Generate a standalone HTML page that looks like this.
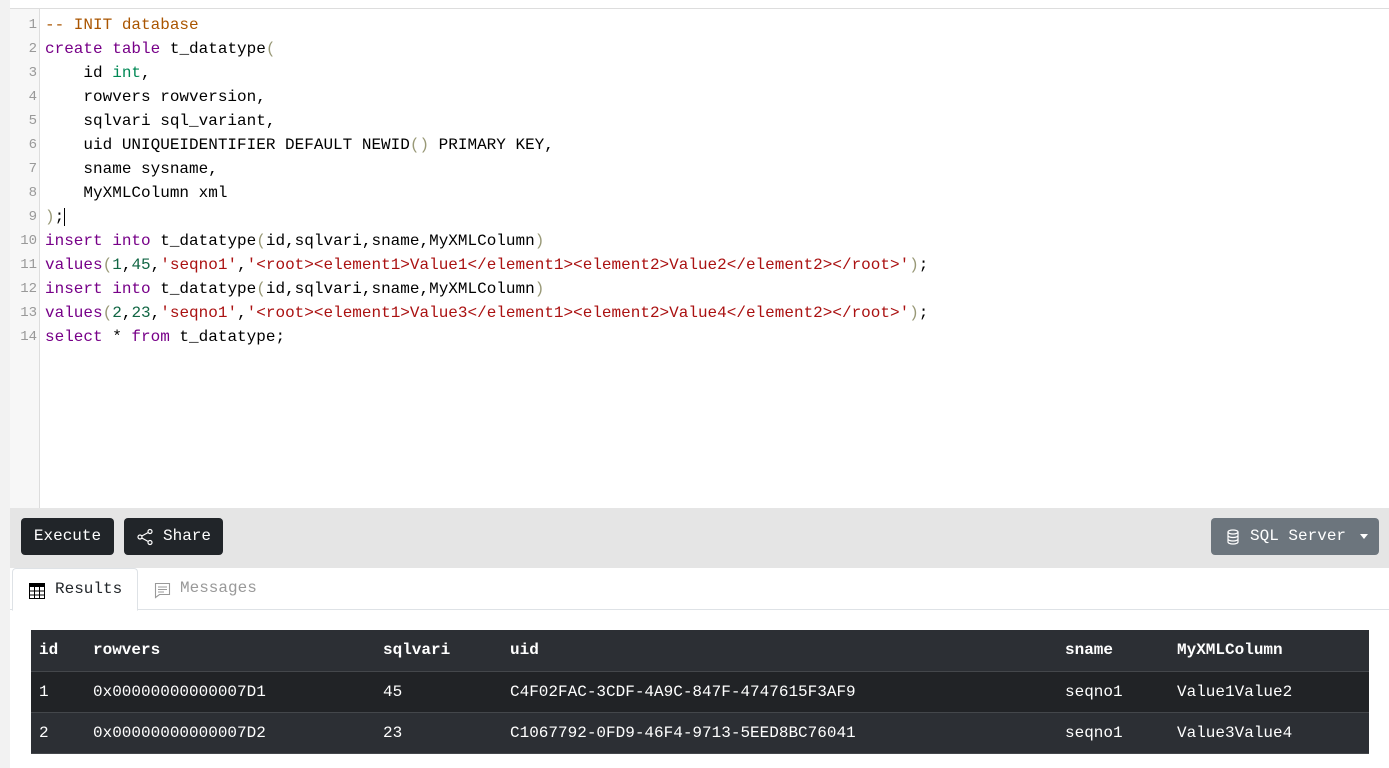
<!DOCTYPE html>
<html><head><meta charset="utf-8"><style>
*{box-sizing:border-box;margin:0;padding:0}
body{width:1389px;height:768px;overflow:hidden;background:#fff;font-family:"Liberation Mono",monospace;font-size:16px;position:relative}
.lstrip{position:absolute;left:0;top:0;width:10px;height:768px;background:#f2f2f2}
.editor{position:absolute;left:10px;top:8px;width:1379px;height:500px;border-top:1px solid #ddd;background:#fff}
.gutter{position:absolute;left:0;top:0;width:30px;height:100%;background:#f7f7f7;border-right:1px solid #ddd}
.ln{position:absolute;left:0;width:27px;text-align:right;color:#999;font-size:14px;height:24px;line-height:24px}
.code{position:absolute;left:35px;top:4px;white-space:pre;line-height:24px;color:#000}
.k{color:#708}.c{color:#a50}.s{color:#a11}.n{color:#164}.t{color:#085}.p{color:#997}
.bar{position:absolute;left:10px;top:508px;width:1379px;height:60px;background:#e5e5e5}
.btn{position:absolute;top:10px;height:37px;border-radius:4px;background:#212529;color:#fff;font-size:16px;line-height:37px}
.tabs{position:absolute;left:10px;top:568px;width:1379px;height:42px;border-bottom:1px solid #dee2e6}
.tab{position:absolute;top:0;height:42px;line-height:40px;font-size:16px}
table{position:absolute;left:31px;top:630px;width:1338px;border-collapse:collapse;color:#fff;font-size:16px}
td,th{text-align:left;height:41px;padding:0 0 0 8px;font-weight:normal;border-bottom:1px solid #44474b}
th{font-weight:bold;background:#2c2f34}
tr.r1 td{background:#212326}tr.r2 td{background:#2c2f34}
</style></head><body>
<div class="lstrip"></div>
<div class="editor">
<div class="gutter">
<div class="ln" style="top:4px">1</div><div class="ln" style="top:28px">2</div><div class="ln" style="top:52px">3</div><div class="ln" style="top:76px">4</div><div class="ln" style="top:100px">5</div><div class="ln" style="top:124px">6</div><div class="ln" style="top:148px">7</div><div class="ln" style="top:172px">8</div><div class="ln" style="top:196px">9</div><div class="ln" style="top:220px">10</div><div class="ln" style="top:244px">11</div><div class="ln" style="top:268px">12</div><div class="ln" style="top:292px">13</div><div class="ln" style="top:316px">14</div>
</div>
<div class="code"><span class="c">-- INIT database</span>
<span class="k">create</span> <span class="k">table</span> t_datatype<span class="p">(</span>
    id <span class="t">int</span>,
    rowvers rowversion,
    sqlvari sql_variant,
    uid UNIQUEIDENTIFIER DEFAULT NEWID<span class="p">()</span> PRIMARY KEY,
    sname sysname,
    MyXMLColumn xml
<span class="p">)</span>;<span style="border-left:1px solid #000"></span>
<span class="k">insert</span> <span class="k">into</span> t_datatype<span class="p">(</span>id,sqlvari,sname,MyXMLColumn<span class="p">)</span>
<span class="k">values</span><span class="p">(</span><span class="n">1</span>,<span class="n">45</span>,<span class="s">'seqno1'</span>,<span class="s">'&lt;root&gt;&lt;element1&gt;Value1&lt;/element1&gt;&lt;element2&gt;Value2&lt;/element2&gt;&lt;/root&gt;'</span><span class="p">)</span>;
<span class="k">insert</span> <span class="k">into</span> t_datatype<span class="p">(</span>id,sqlvari,sname,MyXMLColumn<span class="p">)</span>
<span class="k">values</span><span class="p">(</span><span class="n">2</span>,<span class="n">23</span>,<span class="s">'seqno1'</span>,<span class="s">'&lt;root&gt;&lt;element1&gt;Value3&lt;/element1&gt;&lt;element2&gt;Value4&lt;/element2&gt;&lt;/root&gt;'</span><span class="p">)</span>;
<span class="k">select</span> * <span class="k">from</span> t_datatype;</div>
</div>
<div class="bar">
<div class="btn" style="left:11px;width:93px;text-align:center">Execute</div>
<div class="btn" style="left:114px;width:99px;padding-left:39px">
<svg style="position:absolute;left:12px;top:10px" width="18" height="18" viewBox="0 0 18 18" fill="none" stroke="#fff" stroke-width="1.2"><circle cx="14" cy="3.5" r="2"/><circle cx="4" cy="9" r="2"/><circle cx="14" cy="14.5" r="2"/><path d="M5.8 8 12.2 4.5M5.8 10 12.2 13.5"/></svg>Share</div>
<div class="btn" style="left:1201px;width:168px;background:#6c757d;padding-left:39px">
<svg style="position:absolute;left:15px;top:11px" width="14" height="16" viewBox="0 0 14 16" fill="none" stroke="#fff" stroke-width="1.2"><ellipse cx="7" cy="3" rx="5" ry="2"/><path d="M2 3v10c0 1.1 2.2 2 5 2s5-.9 5-2V3M2 6.5c0 1.1 2.2 2 5 2s5-.9 5-2M2 10c0 1.1 2.2 2 5 2s5-.9 5-2"/></svg>SQL Server<span style="position:absolute;left:149px;top:16px;border-left:4px solid transparent;border-right:4px solid transparent;border-top:5px solid #fff"></span></div>
</div>
<div class="tabs">
<div class="tab" style="left:2px;width:126px;background:#fff;border:1px solid #dee2e6;border-bottom:1px solid #fff;border-radius:4px 4px 0 0;height:43px;padding-left:42px;color:#212529">
<svg style="position:absolute;left:16px;top:14px" width="16" height="16" viewBox="0 0 16 16"><rect x="0.5" y="0.5" width="15" height="15" fill="none" stroke="#000"/><rect x="0" y="0" width="16" height="4" fill="#000"/><path d="M0 8h16M0 12h16M5.5 0v16M10.5 0v16" stroke="#000"/></svg>Results</div>
<div class="tab" style="left:128px;width:130px;padding-left:42px;color:#999">
<svg style="position:absolute;left:16px;top:14px" width="17" height="17" viewBox="0 0 17 17" fill="none" stroke="#999" stroke-width="1.1"><path d="M1.5 1.5h14v11h-10l-4 3z"/><path d="M4 5h9M4 7.5h9M4 10h6"/></svg>Messages</div>
</div>
<table>
<tr><th style="width:54px">id</th><th style="width:290px">rowvers</th><th style="width:127px">sqlvari</th><th style="width:555px">uid</th><th style="width:112px">sname</th><th>MyXMLColumn</th></tr>
<tr class="r1"><td>1</td><td>0x00000000000007D1</td><td>45</td><td>C4F02FAC-3CDF-4A9C-847F-4747615F3AF9</td><td>seqno1</td><td>Value1Value2</td></tr>
<tr class="r2"><td>2</td><td>0x00000000000007D2</td><td>23</td><td>C1067792-0FD9-46F4-9713-5EED8BC76041</td><td>seqno1</td><td>Value3Value4</td></tr>
</table>
</body></html>
